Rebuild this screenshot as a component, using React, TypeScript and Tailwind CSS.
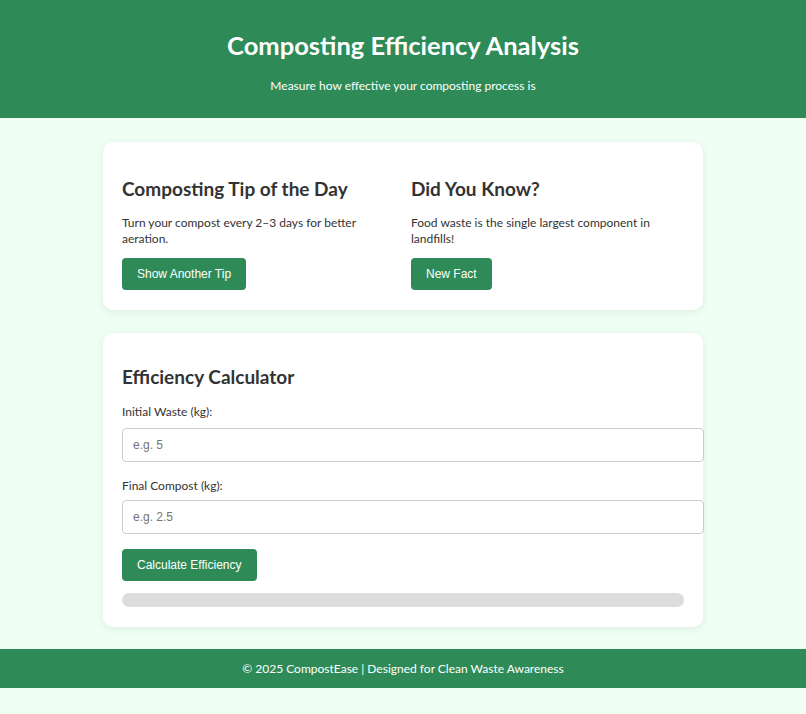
export default function App() {
  return (
    <div className="min-h-[714px] bg-[#f0fff4] font-['Lato',sans-serif] text-[#333]">
      <header className="flex h-[118px] flex-col items-center bg-[#2e8b57] pt-[29px] text-white">
        <h1 className="text-[25.5px] font-bold leading-[32px]">Composting Efficiency Analysis</h1>
        <p className="mt-[17px] text-[12px] leading-[16px]">Measure how effective your composting process is</p>
      </header>

      <main className="mx-auto w-[600px] pt-[24px]">
        <section className="grid grid-cols-2 gap-[16px] rounded-[10px] bg-white px-[19px] pb-[20px] pt-[36px] shadow-[0_2px_8px_rgba(0,0,0,0.08)]">
          <div>
            <h3 className="text-[19px] font-bold leading-[22px]">Composting Tip of the Day</h3>
            <p className="mt-[15px] text-[12px] leading-[16px]">Turn your compost every 2–3 days for better aeration.</p>
            <button className="mt-[11px] h-[32px] rounded-[4px] bg-[#2e8b57] px-[15px] font-['Liberation_Sans',sans-serif] text-[12px] text-white">
              Show Another Tip
            </button>
          </div>
          <div>
            <h3 className="text-[19px] font-bold leading-[22px]">Did You Know?</h3>
            <p className="mt-[15px] text-[12px] leading-[16px]">Food waste is the single largest component in landfills!</p>
            <button className="mt-[11px] h-[32px] rounded-[4px] bg-[#2e8b57] px-[15px] font-['Liberation_Sans',sans-serif] text-[12px] text-white">
              New Fact
            </button>
          </div>
        </section>

        <section className="mt-[23px] rounded-[10px] bg-white px-[19px] pb-[20px] pt-[33px] shadow-[0_2px_8px_rgba(0,0,0,0.08)]">
          <h3 className="text-[19px] font-bold leading-[22px]">Efficiency Calculator</h3>
          <label className="mt-[16px] block text-[12px] leading-[16px]">Initial Waste (kg):</label>
          <input
            type="number"
            placeholder="e.g. 5"
            className="mt-[8px] block h-[34px] w-[582px] rounded-[4px] border border-[#ccc] px-[10px] font-['Liberation_Sans',sans-serif] text-[12px] placeholder:text-[#757575]"
          />
          <label className="mt-[16px] block text-[12px] leading-[16px]">Final Compost (kg):</label>
          <input
            type="number"
            placeholder="e.g. 2.5"
            className="mt-[6px] block h-[34px] w-[582px] rounded-[4px] border border-[#ccc] px-[10px] font-['Liberation_Sans',sans-serif] text-[12px] placeholder:text-[#757575]"
          />
          <button className="mt-[15px] h-[32px] rounded-[4px] bg-[#2e8b57] px-[15px] font-['Liberation_Sans',sans-serif] text-[12px] text-white">
            Calculate Efficiency
          </button>
          <div className="mt-[12px] h-[14px] w-full rounded-full bg-[#ddd]"></div>
        </section>
      </main>

      <footer className="mt-[22px] flex h-[39px] items-center justify-center bg-[#2e8b57] text-[12px] text-white">
        © 2025 CompostEase | Designed for Clean Waste Awareness
      </footer>
    </div>
  );
}
